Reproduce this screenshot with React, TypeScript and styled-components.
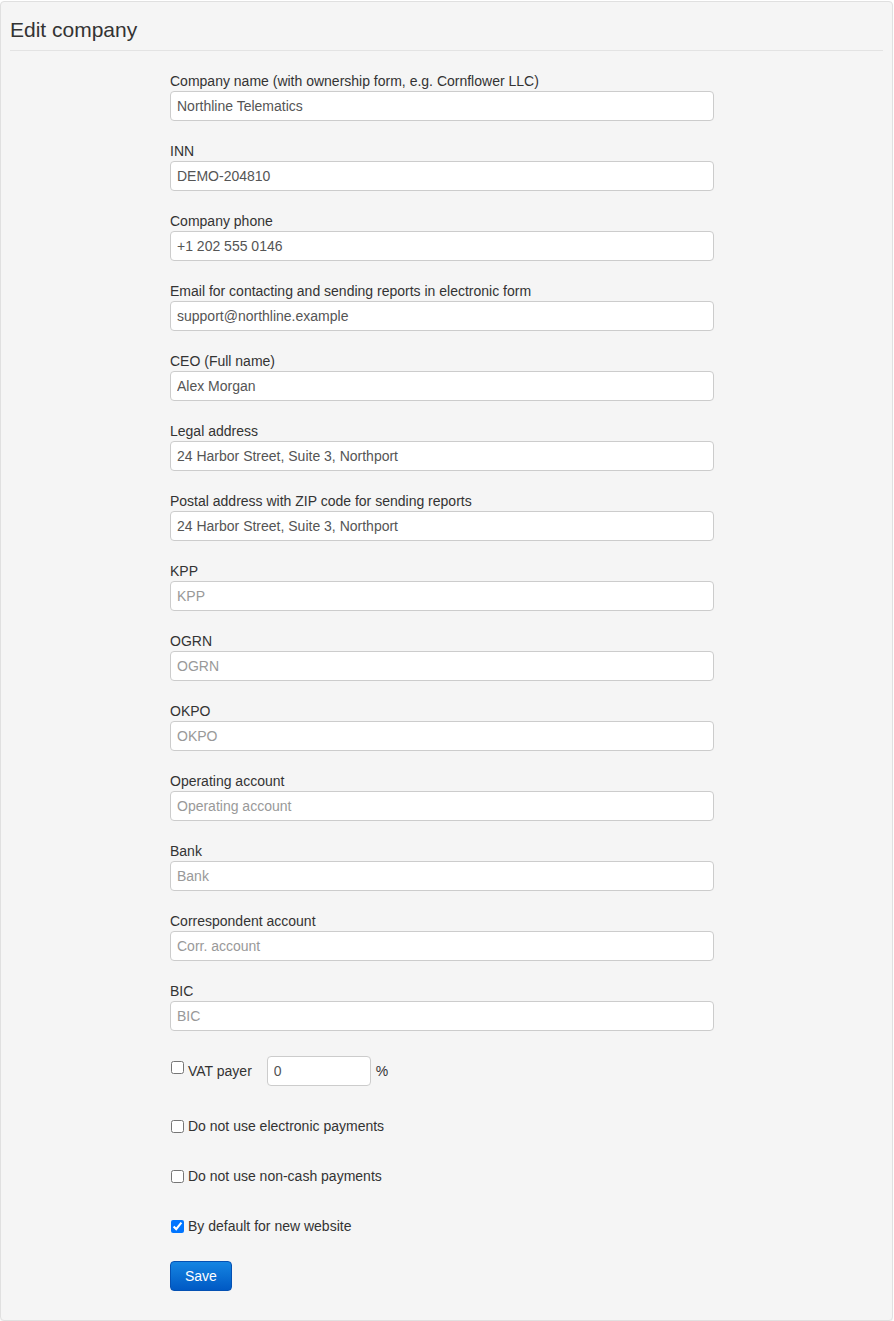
import styled, { createGlobalStyle } from "styled-components";

const GlobalStyle = createGlobalStyle`
  html, body {
    margin: 0;
    padding: 0;
    background: #ffffff;
  }
  body {
    font-family: "Liberation Sans", Arial, sans-serif;
    font-size: 14px;
    color: #333333;
  }
`;

const Panel = styled.div`
  margin: 1px 1px 0 0;
  padding: 0 9px 29px;
  background: #f5f5f5;
  border: 1px solid #e0e0e0;
  border-radius: 4px;
  box-shadow: 0 1px 1px rgba(0, 0, 0, 0.05);
`;

const Header = styled.h1`
  margin: 0;
  padding: 17px 0 9px;
  font-size: 21px;
  font-weight: normal;
  line-height: 22px;
  color: #333333;
  border-bottom: 1px solid #e3e3e3;
`;

const Form = styled.form`
  width: 544px;
  padding: 20px 0 0 160px;
`;

const Group = styled.div`
  margin-bottom: 20px;
`;

const Label = styled.label`
  display: block;
  height: 20px;
  line-height: 20px;
  color: #333333;
`;

const Input = styled.input<{ $width?: number }>`
  box-sizing: border-box;
  display: block;
  width: ${(p) => (p.$width ? `${p.$width}px` : "100%")};
  height: 30px;
  margin: 0;
  padding: 4px 6px;
  font-family: inherit;
  font-size: 14px;
  color: #555555;
  background: #ffffff;
  border: 1px solid #cccccc;
  border-radius: 4px;
  outline: none;

  &::placeholder {
    color: #999999;
  }
`;

const CheckRow = styled.div<{ $top: number }>`
  display: flex;
  align-items: center;
  height: 20px;
  margin-top: ${(p) => p.$top}px;
`;

const VatRow = styled.div`
  display: flex;
  align-items: center;
  height: 30px;
  margin-top: 25px;
`;

const Check = styled.input.attrs({ type: "checkbox" })<{ $raised?: boolean }>`
  width: 13px;
  height: 13px;
  margin: ${(p) => (p.$raised ? "5px" : "0")} 4px 0 1px;
  align-self: ${(p) => (p.$raised ? "flex-start" : "center")};
`;

const CheckText = styled.span`
  line-height: 20px;
`;

const Suffix = styled.span`
  margin-left: 5px;
`;

const SaveButton = styled.button`
  margin-top: 25px;
  height: 30px;
  padding: 0 14px;
  font-family: inherit;
  font-size: 14px;
  color: #ffffff;
  background: linear-gradient(to bottom, #1585e2 0%, #0059c4 100%);
  border: 1px solid #0451b3;
  border-radius: 4px;
  cursor: pointer;
`;

const fields: { label: string; value?: string; placeholder?: string }[] = [
  { label: "Company name (with ownership form, e.g. Cornflower LLC)", value: "Northline Telematics" },
  { label: "INN", value: "DEMO-204810" },
  { label: "Company phone", value: "+1 202 555 0146" },
  { label: "Email for contacting and sending reports in electronic form", value: "support@northline.example" },
  { label: "CEO (Full name)", value: "Alex Morgan" },
  { label: "Legal address", value: "24 Harbor Street, Suite 3, Northport" },
  { label: "Postal address with ZIP code for sending reports", value: "24 Harbor Street, Suite 3, Northport" },
  { label: "KPP", placeholder: "KPP" },
  { label: "OGRN", placeholder: "OGRN" },
  { label: "OKPO", placeholder: "OKPO" },
  { label: "Operating account", placeholder: "Operating account" },
  { label: "Bank", placeholder: "Bank" },
  { label: "Correspondent account", placeholder: "Corr. account" },
  { label: "BIC", placeholder: "BIC" },
];

export default function App() {
  return (
    <>
      <GlobalStyle />
      <Panel>
        <Header>Edit company</Header>
        <Form onSubmit={(e) => e.preventDefault()}>
          {fields.map((f) => (
            <Group key={f.label}>
              <Label>{f.label}</Label>
              <Input defaultValue={f.value} placeholder={f.placeholder} />
            </Group>
          ))}
          <VatRow>
            <Check $raised />
            <CheckText>VAT payer</CheckText>
            <Input $width={104} defaultValue="0" style={{ marginLeft: 15 }} />
            <Suffix>%</Suffix>
          </VatRow>
          <CheckRow $top={30}>
            <Check />
            <CheckText>Do not use electronic payments</CheckText>
          </CheckRow>
          <CheckRow $top={30}>
            <Check />
            <CheckText>Do not use non-cash payments</CheckText>
          </CheckRow>
          <CheckRow $top={30}>
            <Check defaultChecked />
            <CheckText>By default for new website</CheckText>
          </CheckRow>
          <SaveButton type="submit">Save</SaveButton>
        </Form>
      </Panel>
    </>
  );
}
